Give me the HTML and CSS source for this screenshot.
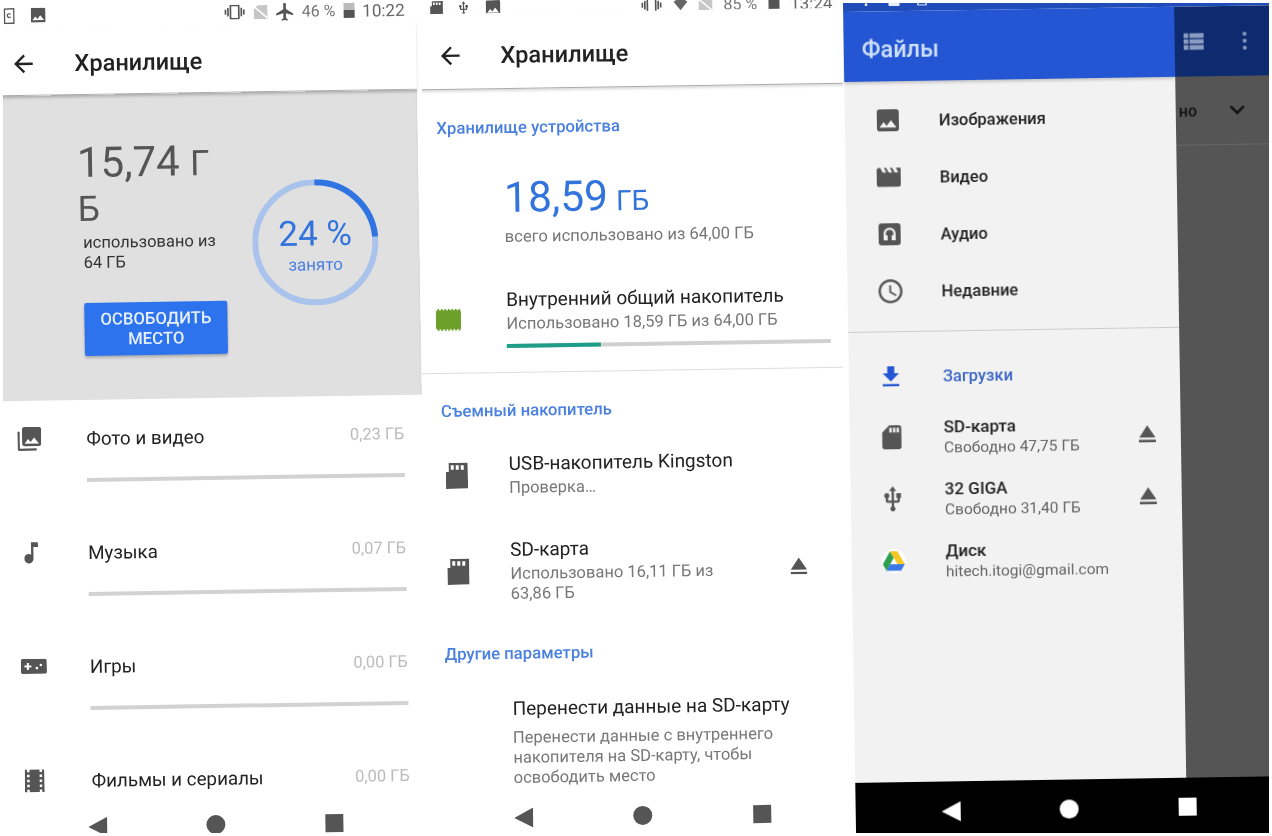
FILE: index.html
```html
<!DOCTYPE html>
<html lang="ru">
<head>
<meta charset="UTF-8">
<meta name="viewport" content="width=device-width, initial-scale=1.0">
<title>Хранилище</title>
<link rel="stylesheet" href="styles.css">
</head>
<body>
  <svg class="sprite" xmlns="http://www.w3.org/2000/svg">
    <symbol id="i-back" viewBox="0 0 24 24"><path d="M20 11H7.83l5.59-5.59L12 4l-8 8 8 8 1.41-1.41L7.83 13H20v-2z"/></symbol>
    <symbol id="i-image" viewBox="3 3 18 18"><path d="M21 19V5c0-1.1-.9-2-2-2H5c-1.1 0-2 .9-2 2v14c0 1.1.9 2 2 2h14c1.1 0 2-.9 2-2zM8.5 13.5l2.5 3.01L14.5 12l4.5 6H5l3.5-4.5z"/></symbol>
    <symbol id="i-library" viewBox="2 2 20 20"><path d="M22 16V4c0-1.1-.9-2-2-2H8c-1.1 0-2 .9-2 2v12c0 1.1.9 2 2 2h12c1.1 0 2-.9 2-2zm-11-4l2.03 2.71L16 11l4 5H8l3-4zM2 6v14c0 1.1.9 2 2 2h14v-2H4V6H2z"/></symbol>
    <symbol id="i-note" viewBox="6 3 12 18"><path d="M12 3v10.55c-.59-.34-1.27-.55-2-.55-2.21 0-4 1.79-4 4s1.79 4 4 4 4-1.79 4-4V7h4V3h-6z"/></symbol>
    <symbol id="i-games" viewBox="0 0 26 15"><path fill-rule="evenodd" d="M2 0h22a2 2 0 0 1 2 2v11a2 2 0 0 1-2 2H2a2 2 0 0 1-2-2V2a2 2 0 0 1 2-2zm4 4v2.5H3.5v2H6V11h2V8.500h2.500v-2H8V4H6zm14 1a1.300 1.300 0 1 0 0 2.600 1.300 1.300 0 0 0 0-2.600zm-4 3a1.300 1.300 0 1 0 0 2.600 1.300 1.300 0 0 0 0-2.600z"/></symbol>
    <symbol id="i-film" viewBox="4 3 16 18"><path d="M18 3v2h-2V3H8v2H6V3H4v18h2v-2h2v2h8v-2h2v2h2V3h-2zM8 17H6v-2h2v2zm0-4H6v-2h2v2zm0-4H6V7h2v2zm10 8h-2v-2h2v2zm0-4h-2v-2h2v2zm0-4h-2V7h2v2z"/></symbol>
    <symbol id="i-microsd" viewBox="0 0 22 26"><path fill-rule="evenodd" d="M3 0h19v26H0V9h3V0zm2 2.500V7h3V2.500H5zm5 0V7h3V2.500h-3zm5 0V7h3V2.500h-3z"/></symbol>
    <symbol id="i-sd" viewBox="4 2 16 20"><path d="M18 2h-8L4.020 8 4 20c0 1.100.9 2 2 2h12c1.100 0 2-.9 2-2V4c0-1.100-.9-2-2-2zm-6 6h-2V4h2v4zm3 0h-2V4h2v4zm3 0h-2V4h2v4z"/></symbol>
    <symbol id="i-eject" viewBox="5 5 14 14"><path d="M5 17h14v2H5zm7-12L5.330 15h13.340z"/></symbol>
    <symbol id="i-usb" viewBox="4 1 16 22"><path d="M15 7v4h1v2h-3V5h2l-3-4-3 4h2v8H8v-2.070c.7-.37 1.200-1.080 1.200-1.930 0-1.210-.99-2.200-2.200-2.200-1.210 0-2.200.99-2.200 2.200 0 .85.5 1.560 1.200 1.930V13c0 1.110.89 2 2 2h3v3.050c-.71.37-1.200 1.100-1.200 1.950 0 1.220.99 2.200 2.200 2.200 1.210 0 2.200-.98 2.200-2.200 0-.85-.49-1.580-1.200-1.950V15h3c1.110 0 2-.89 2-2v-2h1V7h-4z"/></symbol>
    <symbol id="i-clapper" viewBox="2 4 20 16"><path d="M18 4l2 4h-3l-2-4h-2l2 4h-3l-2-4H8l2 4H7L5 4H4c-1.100 0-1.990.9-1.990 2L2 18c0 1.100.9 2 2 2h16c1.100 0 2-.9 2-2V4h-4z"/></symbol>
    <symbol id="i-audio" viewBox="0 0 22 22"><path fill-rule="evenodd" d="M3 0h16a3 3 0 0 1 3 3v16a3 3 0 0 1-3 3H3a3 3 0 0 1-3-3V3a3 3 0 0 1 3-3zm8 4.500c-3.600 0-6 2.600-6 6V17h4v-5H7.200v-1.500c0-2.400 1.600-4 3.800-4s3.800 1.600 3.800 4V12H13v5h4v-6.500c0-3.400-2.400-6-6-6z"/></symbol>
    <symbol id="i-clock" viewBox="2 2 20 20"><path d="M11.990 2C6.470 2 2 6.480 2 12s4.470 10 9.990 10C17.520 22 22 17.520 22 12S17.520 2 11.990 2zM12 20c-4.420 0-8-3.580-8-8s3.580-8 8-8 8 3.580 8 8-3.580 8-8 8zm.5-13H11v6l5.250 3.150.75-1.230-4.500-2.670z"/></symbol>
    <symbol id="i-download" viewBox="5 3 14 17"><path d="M19 9h-4V3H9v6H5l7 7 7-7zM5 18v2h14v-2H5z"/></symbol>
    <symbol id="i-vibrate" viewBox="0 3 24 18"><path d="M0 15h2V9H0v6zm3 2h2V7H3v10zm19-8v6h2V9h-2zm-3 8h2V7h-2v10zM16.500 3h-9C6.670 3 6 3.670 6 4.500v15c0 .83.67 1.500 1.500 1.500h9c.83 0 1.500-.67 1.500-1.500v-15c0-.83-.67-1.500-1.500-1.500zM16 19H8V5h8v14z"/></symbol>
    <symbol id="i-plane" viewBox="2 2 19 20"><path d="M21 16v-2l-8-5V3.500c0-.83-.67-1.500-1.500-1.500S10 2.670 10 3.500V9l-8 5v2l8-2.500V19l-2 1.500V22l3.500-1 3.500 1v-1.500L13 19v-5.500l8 2.500z"/></symbol>
    <symbol id="i-nosim" viewBox="0 0 14 14"><path d="M4 0h10v14H0V4z" opacity=".55"/><path d="M0 1l14 12" stroke="#fff" stroke-width="1.500"/></symbol>
    <symbol id="i-wifi" viewBox="0 0 14 11"><path d="M7 11L0 2.500C2 .9 4.400 0 7 0s5 .9 7 2.500z"/></symbol>
    <symbol id="i-sim" viewBox="0 0 11 16"><path fill-rule="evenodd" d="M1 0h9a1 1 0 0 1 1 1v14a1 1 0 0 1-1 1H1a1 1 0 0 1-1-1V1a1 1 0 0 1 1-1zm.5 1.500v13h8v-13h-8zM5.500 5a2.500 2.500 0 1 0 2 4l-1-.6a1.300 1.300 0 1 1 0-1.800l1-.6a2.500 2.500 0 0 0-2-1z"/></symbol>
    <symbol id="i-list" viewBox="4 5 17 14"><path d="M4 14h4v-4H4v4zm0 5h4v-4H4v4zM4 9h4V5H4v4zm5 5h12v-4H9v4zm0 5h12v-4H9v4zM9 5v4h12V5H9z"/></symbol>
    <symbol id="i-chevron" viewBox="6 8.500 12 7.500"><path d="M16.590 8.590L12 13.170 7.410 8.590 6 10l6 6 6-6z"/></symbol>
  </svg>

  <div class="screens">

    <!-- first shot: storage overview -->
    <div class="shot shot-overview">
      <div class="phone">
        <div class="status status-overview">
          <svg class="ico ico-sim"><use href="#i-sim"/></svg>
          <svg class="ico ico-pic"><use href="#i-image"/></svg>
          <div class="status-right">
            <svg class="ico ico-vibrate"><use href="#i-vibrate"/></svg>
            <svg class="ico ico-nosim"><use href="#i-nosim"/></svg>
            <svg class="ico ico-plane"><use href="#i-plane"/></svg>
            <span class="status-pct">46 %</span>
            <span class="battery battery-half"></span>
            <span class="status-time">10:22</span>
          </div>
        </div>
        <div class="toolbar toolbar-overview">
          <svg class="ico ico-back"><use href="#i-back"/></svg>
          <h1 class="title">Хранилище</h1>
        </div>

        <div class="usage-card">
          <div class="usage-text">
            <div class="usage-num">15,74 <span class="usage-unit">Г<br>Б</span></div>
            <div class="usage-sub">использовано из<br>64 ГБ</div>
            <button class="free-btn">ОСВОБОДИТЬ МЕСТО</button>
          </div>
          <div class="ring">
            <svg class="ring-svg" viewBox="0 0 126 126">
              <circle class="ring-bg" cx="63" cy="63" r="60"/>
              <path class="ring-val" d="M63 3A60 60 0 0 1 123 58"/>
            </svg>
            <div class="ring-pct">24 %</div>
            <div class="ring-lbl">занято</div>
          </div>
        </div>

        <div class="rows">
          <div class="cat">
            <svg class="ico ico-cat"><use href="#i-library"/></svg>
            <div class="cat-body">
              <div class="cat-head"><span>Фото и видео</span><span class="cat-size">0,23 ГБ</span></div>
              <div class="cat-bar"></div>
            </div>
          </div>
          <div class="cat">
            <svg class="ico ico-cat ico-note"><use href="#i-note"/></svg>
            <div class="cat-body">
              <div class="cat-head"><span>Музыка</span><span class="cat-size">0,07 ГБ</span></div>
              <div class="cat-bar"></div>
            </div>
          </div>
          <div class="cat">
            <svg class="ico ico-cat ico-games"><use href="#i-games"/></svg>
            <div class="cat-body">
              <div class="cat-head"><span>Игры</span><span class="cat-size">0,00 ГБ</span></div>
              <div class="cat-bar"></div>
            </div>
          </div>
          <div class="cat">
            <svg class="ico ico-cat ico-film"><use href="#i-film"/></svg>
            <div class="cat-body">
              <div class="cat-head"><span>Фильмы и сериалы</span><span class="cat-size">0,00 ГБ</span></div>
              <div class="cat-bar"></div>
            </div>
          </div>
        </div>

        <div class="navbar nav-overview">
          <svg class="nav-tri" viewBox="0 0 19 20"><path d="M19 0v20L0 10z"/></svg>
          <span class="nav-dot"></span>
          <span class="nav-sq"></span>
        </div>
      </div>
    </div>

    <!-- second shot: storage volumes -->
    <div class="shot shot-volumes">
      <div class="phone">
        <div class="status status-volumes">
          <svg class="ico ico-sd2"><use href="#i-microsd"/></svg>
          <svg class="ico ico-usb2"><use href="#i-usb"/></svg>
          <svg class="ico ico-pic"><use href="#i-image"/></svg>
          <div class="status-right">
            <svg class="ico ico-vibrate"><use href="#i-vibrate"/></svg>
            <svg class="ico ico-wifi"><use href="#i-wifi"/></svg>
            <svg class="ico ico-nosim"><use href="#i-nosim"/></svg>
            <span class="status-pct">85 %</span>
            <span class="battery"></span>
            <span class="status-time">13:24</span>
          </div>
        </div>
        <div class="toolbar toolbar-volumes">
          <svg class="ico ico-back"><use href="#i-back"/></svg>
          <h1 class="title">Хранилище</h1>
        </div>

        <div class="sec sec-device">Хранилище устройства</div>
        <div class="total">
          <div class="total-num">18,59<span class="total-unit">ГБ</span></div>
          <div class="total-sub">всего использовано из 64,00 ГБ</div>
        </div>
        <div class="vol vol-internal">
          <svg class="vol-chip" viewBox="0 0 26 22">
            <rect x="1" y="2" width="24" height="18" rx="1"/>
            <path d="M3 0v22M6.500 0v22M10 0v22M13.500 0v22M17 0v22M20.500 0v22M24 0v22" stroke-width="1.600"/>
          </svg>
          <div class="vol-body">
            <div class="vol-title">Внутренний общий накопитель</div>
            <div class="vol-sub">Использовано 18,59 ГБ из 64,00 ГБ</div>
            <div class="vol-bar"><div class="vol-bar-fill" style="width: 29%"></div></div>
          </div>
        </div>
        <div class="rule"></div>

        <div class="sec sec-removable">Съемный накопитель</div>
        <div class="vol vol-usb">
          <svg class="ico vol-icon"><use href="#i-microsd"/></svg>
          <div class="vol-body">
            <div class="vol-title">USB-накопитель Kingston</div>
            <div class="vol-sub vol-sub-gap">Проверка…</div>
          </div>
        </div>
        <div class="vol vol-sd">
          <svg class="ico vol-icon"><use href="#i-microsd"/></svg>
          <div class="vol-body">
            <div class="vol-title">SD-карта</div>
            <div class="vol-sub vol-sub-wrap">Использовано 16,11 ГБ из 63,86 ГБ</div>
          </div>
          <svg class="ico ico-eject"><use href="#i-eject"/></svg>
        </div>

        <div class="sec sec-other">Другие параметры</div>
        <div class="vol vol-move">
          <div class="vol-body">
            <div class="vol-title">Перенести данные на SD-карту</div>
            <div class="vol-sub vol-sub-long">Перенести данные с внутреннего накопителя на SD-карту, чтобы освободить место</div>
          </div>
        </div>

        <div class="navbar nav-volumes">
          <svg class="nav-tri" viewBox="0 0 19 20"><path d="M19 0v20L0 10z"/></svg>
          <span class="nav-dot"></span>
          <span class="nav-sq"></span>
        </div>
      </div>
    </div>

    <!-- third shot: files drawer -->
    <div class="shot shot-files">
      <div class="phone phone-files">
        <div class="status status-files">
          <svg class="ico ico-frag"><use href="#i-usb"/></svg>
          <svg class="ico ico-frag"><use href="#i-sd"/></svg>
          <svg class="ico ico-frag"><use href="#i-sim"/></svg>
          <div class="status-right">
            <svg class="ico ico-frag"><use href="#i-sim"/></svg>
            <svg class="ico ico-frag"><use href="#i-wifi"/></svg>
            <svg class="ico ico-frag"><use href="#i-nosim"/></svg>
            <svg class="ico ico-frag"><use href="#i-sd"/></svg>
          </div>
        </div>

        <div class="files-main">
          <div class="drawer">
            <div class="drawer-head">Файлы</div>
            <div class="drawer-list">
              <div class="nav-item"><svg class="ico d-img"><use href="#i-image"/></svg><span>Изображения</span></div>
              <div class="nav-item"><svg class="ico d-vid"><use href="#i-clapper"/></svg><span>Видео</span></div>
              <div class="nav-item"><svg class="ico d-img"><use href="#i-audio"/></svg><span>Аудио</span></div>
              <div class="nav-item"><svg class="ico d-clock"><use href="#i-clock"/></svg><span>Недавние</span></div>
            </div>
            <div class="drawer-rule"></div>
            <div class="nav-item nav-item-active"><svg class="ico d-down"><use href="#i-download"/></svg><span>Загрузки</span></div>
            <div class="root">
              <svg class="ico d-sd"><use href="#i-sd"/></svg>
              <div class="root-text"><div class="root-name">SD-карта</div><div class="root-sub">Свободно 47,75 ГБ</div></div>
              <svg class="ico ico-eject"><use href="#i-eject"/></svg>
            </div>
            <div class="root">
              <svg class="ico d-usb"><use href="#i-usb"/></svg>
              <div class="root-text"><div class="root-name">32 GIGA</div><div class="root-sub">Свободно 31,40 ГБ</div></div>
              <svg class="ico ico-eject"><use href="#i-eject"/></svg>
            </div>
            <div class="root">
              <span class="drive-badge">
                <svg class="drive" viewBox="0 0 22 20">
                  <path fill="#2f9e4f" d="M7.300 0L0 13l3.700 6.500L11 6.500z"/>
                  <path fill="#f6c723" d="M7.300 0h7.400L22 13h-7.300z"/>
                  <path fill="#3b78e7" d="M3.700 19.500L7.400 13H22l-3.700 6.500z"/>
                </svg>
              </span>
              <div class="root-text"><div class="root-name">Диск</div><div class="root-sub">hitech.itogi@gmail.com</div></div>
            </div>
          </div>

          <div class="scrim">
            <div class="scrim-bar">
              <svg class="ico s-list"><use href="#i-list"/></svg>
              <span class="s-dots"><i></i><i></i><i></i></span>
            </div>
            <div class="scrim-sort">
              <span>но</span>
              <svg class="ico s-chevron"><use href="#i-chevron"/></svg>
            </div>
          </div>
        </div>

        <div class="navbar nav-files">
          <svg class="nav-tri" viewBox="0 0 19 20"><path d="M19 0v20L0 10z"/></svg>
          <span class="nav-dot"></span>
          <span class="nav-sq"></span>
        </div>
      </div>
    </div>

  </div>
</body>
</html>
```

FILE: styles.css
```css
* {
  box-sizing: border-box;
}

html,
body {
  margin: 0;
  height: 100%;
  background: #fff;
  overflow: hidden;
}

body {
  font-family: Roboto, "Noto Sans", sans-serif;
  color: #222;
}

.sprite {
  display: none;
}

.ico {
  display: block;
  flex: none;
  fill: currentColor;
  color: #555;
}

.screens {
  display: flex;
  padding-left: 3px;
  filter: blur(0.35px);
}

/* each photo is clipped to its own box, the phone inside it is a bit tilted */
.shot {
  height: 833px;
  overflow: hidden;
  background: #fff;
}

.shot-overview {
  width: 419px;
}

.shot-volumes {
  width: 421px;
}

.shot-files {
  width: 426px;
  height: 830px;
  margin-top: 3px;
}

.phone {
  display: flex;
  flex-direction: column;
  height: 868px;
  margin: -16px;
  padding: 16px;
  background: #fff;
  transform: rotate(-0.9deg);
}

.phone-files {
  height: 900px;
  margin: -10px -30px 0 0;
  padding: 10px 30px 0 0;
  background: transparent;
  transform-origin: 0 10px;
}

/* status bars */
.status {
  display: flex;
  align-items: center;
  flex: none;
}

.status-right {
  display: flex;
  align-items: center;
  margin-left: auto;
}

.status-overview {
  height: 25px;
  padding: 0 11px 0 7px;
}

.status-overview .status-right {
  gap: 8px;
}

.status-overview .ico-pic {
  margin-left: 16px;
}

.status-volumes {
  height: 11px;
  padding: 0 4px 0 14px;
}

.status-volumes .status-right {
  gap: 11px;
}

.status-pct {
  font-size: 16px;
  color: #777;
}

.status-time {
  font-size: 17px;
  color: #666;
}

.ico-sim {
  width: 11px;
  height: 16px;
}

.ico-pic {
  width: 15px;
  height: 15px;
}

.ico-sd2 {
  width: 14px;
  height: 15px;
}

.ico-usb2 {
  width: 10px;
  height: 15px;
  margin: 0 17px 0 15px;
}

.ico-vibrate {
  width: 22px;
  height: 15px;
}

.ico-nosim {
  width: 14px;
  height: 14px;
  color: #999;
}

.ico-plane {
  width: 18px;
  height: 18px;
}

.ico-wifi {
  width: 14px;
  height: 11px;
  color: #666;
}

.battery {
  display: block;
  width: 11px;
  height: 15px;
  background: #555;
}

.battery-half {
  background: linear-gradient(#bbb 50%, #555 50%);
}

/* toolbars */
.toolbar {
  display: flex;
  align-items: center;
  flex: none;
  background: #fff;
  border-bottom: 1px solid #aaa;
  box-shadow: 0 2px 3px rgba(0, 0, 0, 0.15);
}

.toolbar-overview {
  height: 68px;
  padding: 5px 0 0 12px;
}

.toolbar-volumes {
  height: 75.5px;
  margin: 0 -16px;
  padding: 10px 0 0 36px;
}

.ico-back {
  width: 28px;
  height: 28px;
  color: #222;
}

.title {
  margin: 0 0 0 37px;
  font-size: 23.600px;
  font-weight: 500;
  color: #222;
}

.toolbar-volumes .title {
  margin-left: 36px;
}

/* overview card */
.usage-card {
  display: flex;
  flex: none;
  height: 305px;
  margin-left: -16px;
  padding-left: 94px;
  background: #e0e0e0;
  box-shadow: inset 0 3px 3px -1px rgba(0, 0, 0, 0.22);
}

.usage-text {
  width: 174px;
  padding-top: 47px;
}

.usage-num {
  font-size: 42px;
  line-height: 41px;
  color: #555;
}

.usage-unit {
  font-size: 35px;
}

.usage-sub {
  margin: 3px 0 30px 5px;
  font-size: 16.500px;
  line-height: 20px;
  color: #333;
}

.free-btn {
  display: block;
  width: 143px;
  height: 53px;
  margin-left: 5px;
  padding: 0 10px;
  border: 0;
  border-radius: 2px;
  background: #2d73ee;
  box-shadow: 0 2px 3px rgba(0, 0, 0, 0.25);
  font-family: inherit;
  font-size: 16.700px;
  font-weight: 500;
  line-height: 20px;
  color: #e8f0ff;
}

.ring {
  position: relative;
  display: flex;
  flex-direction: column;
  align-items: center;
  width: 126px;
  height: 126px;
  margin-top: 88px;
  padding-top: 35px;
}

.ring-svg {
  position: absolute;
  inset: 0;
  fill: none;
  stroke-width: 6;
}

.ring-bg {
  stroke: #a9c3ed;
}

.ring-val {
  stroke: #2f74e0;
}

.ring-pct {
  font-size: 35px;
  line-height: 40px;
  color: #3274dc;
}

.ring-lbl {
  margin-top: 1px;
  font-size: 17px;
  line-height: 18px;
  color: #4a80e0;
}

/* categories */
.rows {
  flex: 1;
  min-height: 0;
  overflow: hidden;
}

.cat {
  display: flex;
  height: 114px;
  padding: 27px 18px 0 14px;
}

.ico-cat {
  width: 24px;
  height: 24px;
  margin-top: -1px;
}

.ico-note {
  width: 14px;
  margin-left: 5px;
  margin-right: 5px;
}

.ico-games {
  width: 26px;
  height: 15px;
  margin-top: 3px;
  margin-right: -2px;
}

.ico-film {
  width: 20px;
  margin-left: 2px;
  margin-right: 2px;
}

.cat-body {
  flex: 1;
  margin-left: 45px;
}

.cat-head {
  display: flex;
  justify-content: space-between;
  height: 24px;
  font-size: 18.800px;
  line-height: 24px;
}

.cat-size {
  font-size: 16.400px;
  color: #bbb;
}

.cat-bar {
  height: 4px;
  margin-top: 27px;
  background: #d2d2d2;
}

/* bottom nav */
.navbar {
  display: grid;
  grid-template-columns: repeat(3, 118.600px);
  justify-items: center;
  align-items: center;
  flex: none;
}

.nav-overview,
.nav-volumes {
  height: 46px;
  padding: 23px 0 0 29px;
  background: #fff;
  color: #555;
}

.nav-volumes {
  margin-top: auto;
  padding: 5px 0 0 36px;
  grid-template-columns: repeat(3, 119px);
}

.nav-tri {
  width: 19px;
  height: 20px;
  fill: currentColor;
}

.nav-dot {
  width: 19px;
  height: 19px;
  border-radius: 50%;
  background: currentColor;
}

.nav-sq {
  width: 18px;
  height: 18px;
  background: currentColor;
}

/* volumes shot */
.sec {
  flex: none;
  height: 20px;
  padding-left: 19px;
  font-size: 16.700px;
  font-weight: 500;
  line-height: 20px;
  color: #4a80e0;
}

.sec-device {
  margin-top: 29.500px;
}

.sec-removable {
  margin-top: 28.300px;
}

.sec-other {
  margin-top: 40.500px;
}

.total {
  flex: none;
  margin-top: 34.800px;
  padding-left: 85.500px;
}

.total-num {
  font-size: 42.500px;
  line-height: 50px;
  color: #3274dc;
}

.total-unit {
  margin-left: 8px;
  font-size: 28px;
}

.total-sub {
  margin-top: -1px;
  font-size: 16.600px;
  line-height: 20px;
  color: #777;
}

.vol {
  display: flex;
  align-items: center;
  flex: none;
  padding-left: 86px;
}

.vol-internal {
  margin-top: 41px;
  padding: 0 11px 0 15px;
}

.vol-usb {
  margin-top: 30.500px;
  padding-left: 23px;
}

.vol-sd {
  margin-top: 40px;
  padding: 0 38px 0 23px;
}

.vol-move {
  margin-top: 33px;
}

.vol-chip {
  flex: none;
  width: 26px;
  height: 22px;
  margin: 2px 45px 0 0;
  fill: #6d9f2b;
  stroke: #6d9f2b;
}

.vol-icon {
  width: 22px;
  height: 26px;
  margin-right: 41px;
}

.vol-body {
  flex: 1;
}

.vol-title {
  font-size: 19px;
  line-height: 24px;
  color: #222;
}

.vol-sub {
  margin-top: 2px;
  font-size: 16.500px;
  line-height: 20px;
  color: #777;
}

.vol-sub-wrap {
  width: 225px;
}

.vol-sub-long {
  width: 300px;
  margin-top: 6.500px;
}

.vol-bar {
  height: 4px;
  margin-top: 10px;
  background: #d0d0d0;
}

.vol-bar-fill {
  height: 100%;
  background: #1e9e8a;
}

.ico-eject {
  width: 17px;
  height: 17px;
}

.rule {
  flex: none;
  height: 1px;
  margin: 24px -16px 0;
  background: #ddd;
}

/* files shot */
.status-files {
  align-items: flex-end;
  height: 9px;
  padding: 0 60px 5px 16px;
  background: #1f4cb8;
}

.status-files .ico-frag {
  width: 14px;
  height: 14px;
  margin-right: 14px;
  color: #e6ecf8;
}

.status-files .status-right {
  align-items: flex-end;
  gap: 10px;
}

.files-main {
  display: flex;
  flex: none;
  height: 771px;
}

.drawer {
  flex: none;
  width: 331px;
  background: #f2f2f2;
}

.drawer-head {
  height: 70px;
  padding-left: 18px;
  background: #2456d3;
  box-shadow: 0 2px 3px rgba(0, 0, 0, 0.2);
  font-size: 23.500px;
  font-weight: 500;
  line-height: 76px;
  color: #cfe0fa;
}

.drawer-list {
  padding-top: 10.500px;
}

.nav-item {
  display: flex;
  align-items: center;
  height: 57px;
  padding-left: 31px;
  font-size: 16.500px;
  font-weight: 500;
  color: #222;
}

.d-img {
  width: 22px;
  height: 22px;
  margin: 0 40px 0 1px;
}

.d-vid {
  width: 24px;
  height: 20px;
  margin-right: 39px;
}

.d-clock {
  width: 24px;
  height: 24px;
  margin-right: 39px;
}

.drawer-rule {
  height: 1px;
  margin-top: 11.500px;
  background: #ccc;
}

.nav-item-active {
  height: 60px;
  margin-top: 14px;
  padding-left: 33px;
  color: #3d66c4;
}

.d-down {
  width: 18px;
  height: 20px;
  margin-right: 43px;
  color: #2456d3;
}

.root {
  display: flex;
  align-items: center;
  height: 62px;
  padding: 0 25px 0 32px;
}

.root-text {
  flex: 1;
  margin-left: 42px;
}

.root-name {
  font-size: 17px;
  font-weight: 500;
  line-height: 20px;
  color: #222;
}

.root-sub {
  margin-top: 1px;
  font-size: 15.500px;
  line-height: 20px;
  color: #666;
}

.d-sd {
  width: 20px;
  height: 24px;
}

.d-usb {
  width: 20px;
  height: 26px;
}

.drive-badge {
  display: flex;
  align-items: center;
  justify-content: center;
  flex: none;
  width: 24px;
  height: 24px;
  margin: 0 -2px;
  border-radius: 50%;
  background: #fff;
}

.drive {
  width: 22px;
  height: 20px;
}

.scrim {
  flex: 1;
  background: #555;
}

.scrim-bar {
  display: flex;
  align-items: center;
  height: 70px;
  padding-left: 9px;
  background: #0f2b70;
}

.s-list {
  width: 20px;
  height: 18px;
  color: #8a9cc0;
}

.s-dots {
  display: flex;
  flex-direction: column;
  gap: 3px;
  margin-left: 39px;
}

.s-dots i {
  display: block;
  width: 4px;
  height: 4px;
  border-radius: 50%;
  background: #8a9cc0;
}

.scrim-sort {
  display: flex;
  align-items: center;
  height: 69px;
  padding-left: 3px;
  border-bottom: 1px solid #666;
  font-size: 16px;
  font-weight: 500;
  color: #111;
}

.s-chevron {
  width: 15px;
  height: 10px;
  margin-left: 33px;
  color: #111;
}

.nav-files {
  height: 100px;
  padding: 20px 0 0 36px;
  grid-template-columns: repeat(3, 118.500px);
  align-items: start;
  background: #000;
  color: #fff;
}
```
